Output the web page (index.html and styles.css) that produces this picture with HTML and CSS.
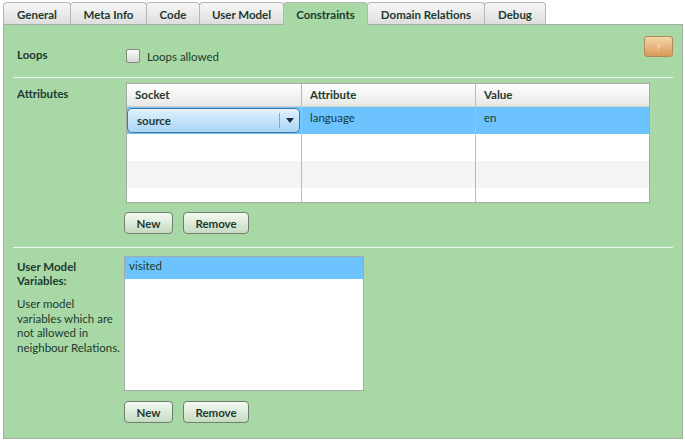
FILE: index.html
```html
<!DOCTYPE html>
<html>
<head>
<meta charset="utf-8">
<link rel="stylesheet" href="styles.css">
</head>
<body>
<div class="app">
  <div class="tabs">
    <div class="tab t1">General</div>
    <div class="tab t2">Meta Info</div>
    <div class="tab t3">Code</div>
    <div class="tab t4">User Model</div>
    <div class="tab t5 active">Constraints</div>
    <div class="tab t6">Domain Relations</div>
    <div class="tab t7">Debug</div>
  </div>
  <div class="panel">
    <div class="section s-loops">
      <div class="label lbl-loops">Loops</div>
      <label class="check">
        <span class="box"></span>
        <span>Loops allowed</span>
      </label>
      <div class="help">?</div>
    </div>
    <div class="sep"></div>
    <div class="section s-attr">
      <div class="label lbl-attr">Attributes</div>
      <div class="content">
        <div class="grid">
          <div class="ghead">
            <div class="cell c1">Socket</div>
            <div class="cell c2">Attribute</div>
            <div class="cell c3">Value</div>
          </div>
          <div class="grow sel">
            <div class="cell c1">
              <div class="combo"><span class="combo-text">source</span><span class="combo-arrow"><svg width="8" height="5" viewBox="0 0 8 5"><path d="M0 0H8L4 5Z" fill="#1c2e3a"/></svg></span></div>
            </div>
            <div class="cell c2">language</div>
            <div class="cell c3">en</div>
          </div>
          <div class="grow">
            <div class="cell c1"></div><div class="cell c2"></div><div class="cell c3"></div>
          </div>
          <div class="grow alt">
            <div class="cell c1"></div><div class="cell c2"></div><div class="cell c3"></div>
          </div>
          <div class="grow last">
            <div class="cell c1"></div><div class="cell c2"></div><div class="cell c3"></div>
          </div>
        </div>
        <div class="buttons">
          <div class="btn b-new">New</div>
          <div class="btn b-remove">Remove</div>
        </div>
      </div>
    </div>
    <div class="sep"></div>
    <div class="section s-um">
      <div class="label lbl-um">
        <div class="lbl-title">User Model<br>Variables:</div>
        <div class="lbl-desc">User model<br>variables which are<br>not allowed in<br>neighbour Relations.</div>
      </div>
      <div class="content">
        <div class="list">
          <div class="item sel">visited</div>
        </div>
        <div class="buttons b2">
          <div class="btn b-new">New</div>
          <div class="btn b-remove">Remove</div>
        </div>
      </div>
    </div>
  </div>
</div>
</body>
</html>
```

FILE: styles.css
```css
* { box-sizing: border-box; }
html, body { margin: 0; padding: 0; background: #ffffff; }
body {
  font-family: "Lato", "Open Sans", sans-serif;
  font-size: 11.5px;
  color: #1e3a30;
}
.app { padding: 2px 0 0 3px; width: 685px; }

.tabs { display: flex; height: 22px; }
.tab {
  height: 22px;
  margin-right: -1px;
  border: 1px solid #b4b8b4;
  border-bottom: none;
  border-radius: 4px 4px 0 0;
  background: linear-gradient(#f7f7f7, #dedede);
  font-weight: bold;
  font-size: 11.5px;
  color: #1e3a30;
  display: flex;
  align-items: center;
  justify-content: center;
  padding-top: 1px;
}
.t1 { width: 68px; }
.t2 { width: 77px; }
.t3 { width: 54px; }
.t4 { width: 85px; }
.t5 { width: 85px; }
.t6 { width: 118px; }
.t7 { width: 62px; }
.tab.active {
  background: #a8d8a6;
  position: relative;
  z-index: 1;
  height: 23px;
  margin-bottom: -1px;
}

.panel {
  width: 680px;
  height: 415px;
  background: #a8d8a6;
  border: 1px solid #a3aea3;
}

.section { display: flex; align-items: flex-start; padding-left: 13px; }
.label { width: 109px; font-weight: bold; line-height: 14px; }

.s-loops { height: 52px; padding-right: 9px; }
.lbl-loops { margin-top: 23px; }
.check { display: flex; align-items: center; margin-top: 24px; gap: 7px; }
.box {
  width: 14px; height: 14px;
  border: 1px solid #7f8c80;
  border-radius: 2px;
  background: linear-gradient(#fbfbfb, #d2d6d2);
}
.help {
  margin-left: auto;
  margin-top: 11px;
  width: 29px; height: 21px;
  border: 1px solid #b48858;
  border-radius: 3px;
  background: linear-gradient(#f5d6a6, #d99a5a);
  color: #efdcc0;
  font-size: 10px;
  display: flex; align-items: center; justify-content: center;
}

.sep { height: 1px; margin: 0 9px; background: #eef6ec; }

.s-attr { height: 169px; padding-top: 5px; }
.lbl-attr { margin-top: 4px; }
.grid {
  width: 524px;
  height: 120px;
  border: 1px solid #a6aaa6;
  background: #ffffff;
  overflow: hidden;
}
.ghead { display: flex; height: 23px; background: linear-gradient(#ffffff, #e6e8e6); border-bottom: 1px solid #cfd2cf; font-weight: bold; }
.ghead .cell { padding-top: 4px; }
.grow { display: flex; height: 27px; background: #ffffff; }
.grow.alt { background: #f4f4f4; }
.grow.sel { background: #6cc3fd; }
.cell { padding-left: 8px; padding-top: 4px; border-right: 1px solid #b8bcb8; }
.c1 { width: 175px; }
.c2 { width: 174px; }
.c3 { width: 173px; border-right: none; }
.grow.sel .c1 { padding: 1px 1px 0 0; }
.combo {
  height: 25px;
  border: 1px solid #4f7592;
  border-radius: 5px;
  background: linear-gradient(#e0f1fd, #a9d6f6);
  display: flex;
  align-items: center;
  font-weight: bold;
}
.combo-text { flex: 1; padding-left: 9px; }
.combo-arrow {
  width: 20px; height: 15px;
  border-left: 1px solid #8aa9bf;
  display: flex; align-items: center; justify-content: center;
}

.buttons { display: flex; gap: 10px; margin-top: 9px; margin-left: -2px; }
.btn {
  height: 22px;
  border: 1px solid #6f806f;
  border-radius: 4px;
  background: linear-gradient(#f5faf3, #c5dbc1);
  font-weight: bold;
  display: flex; align-items: center; justify-content: center;
}
.b-new { width: 49px; }
.b-remove { width: 66px; }

.s-um { padding-top: 8px; }
.lbl-um { margin-top: 4px; }
.lbl-desc { font-weight: normal; margin-top: 9px; line-height: 14.5px; white-space: nowrap; }
.s-um .content { margin-left: -2px; }
.list {
  width: 240px;
  height: 135px;
  border: 1px solid #a6aaa6;
  background: #ffffff;
}
.item { height: 22px; padding-left: 4px; padding-top: 2px; }
.item.sel { background: #6cc3fd; }
.b2 { margin-top: 10px; margin-left: 0; }
```
